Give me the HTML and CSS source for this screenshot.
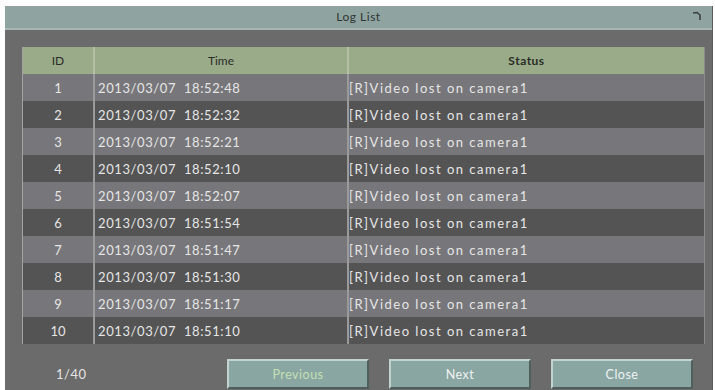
FILE: index.html
```html
<!DOCTYPE html>
<html lang="en">
<head>
  <meta charset="UTF-8">
  <title>Log List</title>
  <meta name="viewport" content="width=device-width, initial-scale=1.0">
  <link rel="stylesheet" href="styles.css">
</head>
<body>

  <div class="screen">
    <div class="titlebar">
      <span class="title">Log List</span>
      <svg class="back" width="10" height="10" viewBox="0 0 10 10">
        <path d="M1 2 L5 1.5 L8 4 L8 9" fill="none" stroke="#3a3f3e" stroke-width="1.6"/>
      </svg>
    </div>

    <div class="content">
      <table>
        <thead>
          <tr>
            <th class="c-id">ID</th>
            <th class="c-time">Time</th>
            <th class="c-status">Status</th>
          </tr>
        </thead>
        <tbody>
          <tr><td class="c-id">1</td><td class="c-time">2013/03/07&nbsp;&nbsp;18:52:48</td><td class="c-status">[R]Video lost on camera1</td></tr>
          <tr><td class="c-id">2</td><td class="c-time">2013/03/07&nbsp;&nbsp;18:52:32</td><td class="c-status">[R]Video lost on camera1</td></tr>
          <tr><td class="c-id">3</td><td class="c-time">2013/03/07&nbsp;&nbsp;18:52:21</td><td class="c-status">[R]Video lost on camera1</td></tr>
          <tr><td class="c-id">4</td><td class="c-time">2013/03/07&nbsp;&nbsp;18:52:10</td><td class="c-status">[R]Video lost on camera1</td></tr>
          <tr><td class="c-id">5</td><td class="c-time">2013/03/07&nbsp;&nbsp;18:52:07</td><td class="c-status">[R]Video lost on camera1</td></tr>
          <tr><td class="c-id">6</td><td class="c-time">2013/03/07&nbsp;&nbsp;18:51:54</td><td class="c-status">[R]Video lost on camera1</td></tr>
          <tr><td class="c-id">7</td><td class="c-time">2013/03/07&nbsp;&nbsp;18:51:47</td><td class="c-status">[R]Video lost on camera1</td></tr>
          <tr><td class="c-id">8</td><td class="c-time">2013/03/07&nbsp;&nbsp;18:51:30</td><td class="c-status">[R]Video lost on camera1</td></tr>
          <tr><td class="c-id">9</td><td class="c-time">2013/03/07&nbsp;&nbsp;18:51:17</td><td class="c-status">[R]Video lost on camera1</td></tr>
          <tr><td class="c-id">10</td><td class="c-time">2013/03/07&nbsp;&nbsp;18:51:10</td><td class="c-status">[R]Video lost on camera1</td></tr>
        </tbody>
      </table>

      <div class="footer">
        <span class="page">1/40</span>
        <div class="buttons">
          <button class="disabled">Previous</button>
          <button>Next</button>
          <button>Close</button>
        </div>
      </div>
    </div>
  </div>

</body>
</html>
```

FILE: styles.css
```css
body {
  margin: 0;
  background: #fdfdfd;
  font-family: Lato, "Open Sans", sans-serif;
  font-size: 12px;
}
.screen {
  margin: 6px 0 0 5px;
  width: 707px;
  height: 384px;
  background: #6b6b6b;
  border-right: 1px solid #5c5c5c;
}
.titlebar {
  position: relative;
  height: 22px;
  line-height: 22px;
  text-align: center;
  background: #8fa3a0;
  border-bottom: 2px solid #a9b7b4;
}
.title {
  color: #2f3534;
  font-size: 12px;
  letter-spacing: 0.5px;
}
.back {
  position: absolute;
  right: 10px;
  top: 5px;
}
.content {
  padding: 17px 7px 0 17px;
}
table {
  width: 683px;
  border-collapse: collapse;
  border-left: 1px solid #8a8a8a;
  border-right: 1px solid #8a8a8a;
  table-layout: fixed;
}
th, td {
  height: 27px;
  padding: 0;
  border-left: 2px solid #9a9a9a;
}
th:first-child, td:first-child {
  border-left: 1px solid #a3a3a3;
}
th {
  background: #9aab8a;
  color: #2a2d27;
  font-weight: normal;
  font-size: 12px;
  text-align: center;
  border-left-color: #b3c0a5;
}
th.c-status {
  font-weight: bold;
  letter-spacing: 0.5px;
}
td {
  color: #e6e6e6;
  font-size: 13px;
}
tbody tr:nth-child(odd) td {
  background: #77767a;
}
tbody tr:nth-child(even) td {
  background: #545454;
}
.c-id {
  width: 70px;
  text-align: center;
}
.c-time {
  width: 252px;
}
td.c-time {
  padding-left: 3px;
  letter-spacing: 0.6px;
}
td.c-status {
  letter-spacing: 1.5px;
}
.footer {
  display: flex;
  align-items: center;
  margin-top: 15px;
}
.page {
  width: 100px;
  padding-left: 34px;
  color: #e4e4e4;
  font-size: 13px;
  letter-spacing: 0.5px;
}
.buttons {
  display: flex;
  gap: 20px;
  margin-left: 71px;
}
button {
  width: 142px;
  height: 30px;
  background: #8aa6a3;
  color: #eef3f2;
  font-family: Lato, "Open Sans", sans-serif;
  font-size: 12.5px;
  letter-spacing: 0.5px;
  border: 2px solid;
  border-color: #c1d2cf #4f5f5d #4f5f5d #c1d2cf;
  border-radius: 0;
  padding: 0;
}
button.disabled {
  color: #c4e0b4;
}
```
